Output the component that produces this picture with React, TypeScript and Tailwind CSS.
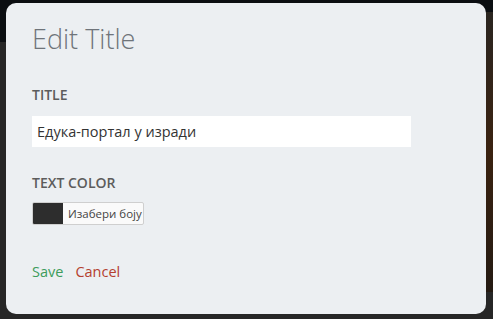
import React from "react";

export default function App() {
  return (
    <div className="relative w-[493px] h-[319px] overflow-hidden bg-[#262626] font-['Open_Sans',sans-serif]">
      {/* backdrop behind the modal */}
      <div className="absolute left-0 top-0 w-full h-[12px] bg-[#0b0e11]" />
      <div className="absolute left-0 top-0 w-[8px] h-[42px] bg-[#0b0e11]" />
      <div className="absolute right-0 top-[12px] w-[8px] h-[280px] bg-gradient-to-b from-[#2a2520] via-[#3a2210] to-[#241a12]" />

      <div className="absolute left-[6px] top-[3px] w-[480px] h-[311px] rounded-[10px] bg-[#eceff2] px-[26px] pt-[18px]">
        <h1 className="text-[27px] font-light leading-[36px] text-[#6f747a]">Edit Title</h1>

        <div className="mt-[28px] text-[14px] font-semibold leading-[20px] text-[#5c5c5c]">TITLE</div>
        <div className="mt-[11px] w-[379px] h-[31px] bg-white flex items-center px-[5px] text-[14.5px] text-[#333]">
          Едука-портал у изради
        </div>

        <div className="mt-[26px] text-[14px] font-semibold leading-[20px] text-[#5c5c5c]">TEXT COLOR</div>
        <div className="mt-[9px] flex w-[112px] h-[23px] rounded-[2px] border border-[#cfcfcf] bg-[#fafafa] overflow-hidden">
          <div className="w-[30px] h-full bg-[#2d2d2d]" />
          <div className="flex-1 flex items-center pl-[5px] text-[11.5px] text-[#444]">Изабери боју</div>
        </div>

        <div className="mt-[36px] flex gap-[12px] text-[14.5px]">
          <span className="text-[#3d9c5c]">Save</span>
          <span className="text-[#b4402f]">Cancel</span>
        </div>
      </div>
    </div>
  );
}
